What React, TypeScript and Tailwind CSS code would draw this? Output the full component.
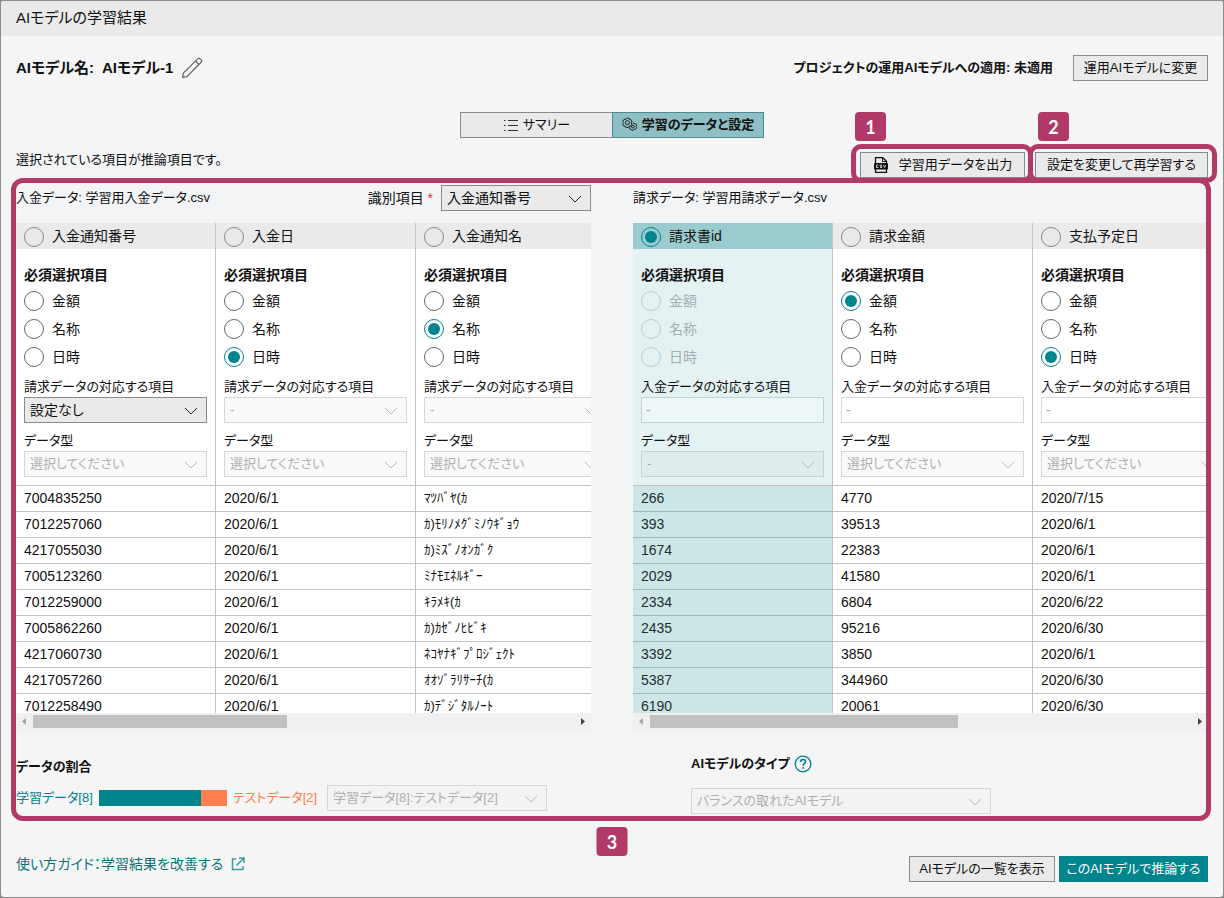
import type { ReactNode } from 'react';

const KINDS = ['金額', '名称', '日時'];

type Column = {
  name: string;
  kind?: string;
  target: string;
  dataType: string;
  targetEnabled?: boolean;
  kana?: boolean;
  rows: string[];
};

const paymentColumns: Column[] = [
  {
    name: '入金通知番号',
    target: '設定なし',
    targetEnabled: true,
    dataType: '選択してください',
    rows: ['7004835250', '7012257060', '4217055030', '7005123260', '7012259000', '7005862260', '4217060730', '4217057260', '7012258490'],
  },
  {
    name: '入金日',
    kind: '日時',
    target: '-',
    dataType: '選択してください',
    rows: ['2020/6/1', '2020/6/1', '2020/6/1', '2020/6/1', '2020/6/1', '2020/6/1', '2020/6/1', '2020/6/1', '2020/6/1'],
  },
  {
    name: '入金通知名',
    kind: '名称',
    target: '-',
    dataType: '選択してください',
    kana: true,
    rows: ['ﾏﾂﾊﾞﾔ(ｶ', 'ｶ)ﾓﾘﾉﾒｸﾞﾐﾉｳｷﾞｮｳ', 'ｶ)ﾐｽﾞﾉｵﾝｶﾞｸ', 'ﾐﾅﾓｴﾈﾙｷﾞｰ', 'ｷﾗﾒｷ(ｶ', 'ｶ)ｶｾﾞﾉﾋﾋﾞｷ', 'ﾈｺﾔﾅｷﾞﾌﾟﾛｼﾞｪｸﾄ', 'ｵｵｿﾞﾗﾘｻｰﾁ(ｶ', 'ｶ)ﾃﾞｼﾞﾀﾙﾉｰﾄ'],
  },
];

const invoiceColumns: Column[] = [
  {
    name: '請求書id',
    target: '-',
    dataType: '-',
    rows: ['266', '393', '1674', '2029', '2334', '2435', '3392', '5387', '6190'],
  },
  {
    name: '請求金額',
    kind: '金額',
    target: '-',
    dataType: '選択してください',
    rows: ['4770', '39513', '22383', '41580', '6804', '95216', '3850', '344960', '20061'],
  },
  {
    name: '支払予定日',
    kind: '日時',
    target: '-',
    dataType: '選択してください',
    rows: ['2020/7/15', '2020/6/1', '2020/6/1', '2020/6/1', '2020/6/22', '2020/6/30', '2020/6/1', '2020/6/30', '2020/6/30'],
  },
];

const Button = ({ className, children }: { className: string; children: ReactNode }) => (
  <button
    className={`flex h-[26px] items-center justify-center whitespace-nowrap border border-[#8a8a8a] bg-[#eaeaea] text-[13px] hover:bg-[#dedede] ${className}`}
  >
    {children}
  </button>
);

const Badge = ({ children }: { children: ReactNode }) => (
  <span className="flex h-[29px] w-[31px] items-center justify-center rounded bg-[#b23a68] font-[Lato,sans-serif] text-lg font-bold text-white">
    {children}
  </span>
);

type SelectProps = { id?: string; label?: string; value: string; disabled?: boolean; tinted?: boolean };

const Select = ({ id, label, value, disabled, tinted }: SelectProps) => (
  <div className="relative">
    <select
      id={id}
      aria-label={label}
      disabled={disabled}
      className={`block h-[26px] w-full appearance-none border pl-[5px] pr-8 disabled:text-[13px] disabled:opacity-100 ${
        tinted
          ? 'border-[#c3d3d4] bg-[#dfebec] text-[#9fabac]'
          : disabled
            ? 'border-[#d6d6d6] bg-[#efefef]/40 text-[#b0b0b0]'
            : 'border-[#8a8a8a] bg-[#eaeaea]'
      }`}
    >
      <option>{value}</option>
    </select>
    <svg
      className={`pointer-events-none absolute right-[9px] top-[10px] h-2 w-[14px] ${disabled ? 'text-[#b8b8b8]' : 'text-[#222]'}`}
      viewBox="0 0 14 8"
      fill="none"
      stroke="currentColor"
    >
      <path d="M1 1l6 6 6-6" />
    </svg>
  </div>
);

const radioClass =
  'm-0 size-5 shrink-0 appearance-none rounded-full border p-[3px] checked:border-[#00848e] checked:bg-[#00848e] bg-clip-content';

type DataTableProps = { id: string; columns: Column[]; selected?: number; targetLabel: string; targetAsText?: boolean };

const DataTable = ({ id, columns, selected, targetLabel, targetAsText }: DataTableProps) => (
  <div className="h-[490px] overflow-hidden">
    <table className="w-[600px] table-fixed border-separate border-spacing-0 bg-white text-left">
      <thead>
        <tr>
          {columns.map((col, i) => (
            <th
              key={col.name}
              className={`h-[26px] border-r border-[#c5c5c5] p-0 font-normal ${i === selected ? 'bg-[#9acccf]' : 'bg-[#eaeaea]'}`}
            >
              <label className="flex items-center gap-2 pl-2 pt-[2px]">
                <input type="radio" name={`${id}-column`} defaultChecked={i === selected} className={`${radioClass} border-[#8a8a8a]`} />
                <span className="pb-[2px]">{col.name}</span>
              </label>
            </th>
          ))}
        </tr>
        <tr>
          {columns.map((col, i) => {
            const tinted = i === selected;
            const key = `${id}-${i}`;
            return (
              <td
                key={col.name}
                className={`border-b border-r border-[#c5c5c5] px-2 pb-2 pt-4 align-top ${tinted ? 'bg-[#e4f2f3]' : 'bg-white'}`}
              >
                <fieldset disabled={tinted} className="mb-[10px]">
                  <legend className="mb-[6px] font-bold">必須選択項目</legend>
                  <div className="flex flex-col gap-2">
                    {KINDS.map((kind) => (
                      <label key={kind} className={`flex items-center gap-2 ${tinted ? 'text-[#a3b0b1]' : ''}`}>
                        <input
                          type="radio"
                          name={`${key}-kind`}
                          defaultChecked={kind === col.kind}
                          className={`${radioClass} ${tinted ? 'border-[#bccccd]' : 'border-[#666]'}`}
                        />
                        {kind}
                      </label>
                    ))}
                  </div>
                </fieldset>
                <label htmlFor={`${key}-target`} className="block whitespace-nowrap text-[13px]">{targetLabel}</label>
                {targetAsText ? (
                  <input
                    id={`${key}-target`}
                    type="text"
                    disabled
                    defaultValue={col.target}
                    className={`block h-[26px] w-full border px-1 ${
                      tinted ? 'border-[#c3d3d4] bg-[#edf6f8] text-[#9fabac]' : 'border-[#d6d6d6] bg-white text-[#a8a8a8]'
                    }`}
                  />
                ) : (
                  <Select id={`${key}-target`} value={col.target} disabled={!col.targetEnabled} />
                )}
                <label htmlFor={`${key}-type`} className="mt-2 block text-[13px]">データ型</label>
                <Select id={`${key}-type`} value={col.dataType} disabled tinted={tinted} />
              </td>
            );
          })}
        </tr>
      </thead>
      <tbody>
        {columns[0].rows.map((_, r) => (
          <tr key={r}>
            {columns.map((col, i) => (
              <td
                key={col.name}
                className={`h-[26px] border-b border-r px-2 pb-[2px] pt-0 ${
                  i === selected ? 'border-b-[#9bb8ba] border-r-[#c5c5c5] bg-[#cce6e7] text-[#1c2f30]' : 'border-[#c5c5c5]'
                } ${col.kana ? 'text-[13px] [font-feature-settings:normal]' : ''}`}
              >
                {col.rows[r]}
              </td>
            ))}
          </tr>
        ))}
      </tbody>
    </table>
  </div>
);

const ScrollBar = ({ size }: { size: number }) => (
  <div className="flex h-[17px] items-center bg-[#f0f0f0]">
    <svg className="h-[17px] w-[17px] shrink-0" viewBox="0 0 17 17" fill="#a3a3a3">
      <path d="M10 5v7L6 8.500z" />
    </svg>
    <div className="h-[13px] flex-1">
      <div className="h-full bg-[#c1c1c1]" style={{ width: `${size}%` }} />
    </div>
    <svg className="h-[17px] w-[17px] shrink-0" viewBox="0 0 17 17" fill="#404040">
      <path d="M7 5v7l4-3.500z" />
    </svg>
  </div>
);

const GearsIcon = () => (
  <svg className="size-4" viewBox="0 0 16 16" fill="none" stroke="#222" strokeWidth="1">
    <path d="M4.500 1.200h2.600l.5 1.300 1.400.2 1 2-.8 1.200.6 1.300-1.300 2.100-1.500-.1-.9 1.200H3.700l-.7-1.300-1.500-.2L.6 6.800l.8-1.200-.6-1.300 1.200-1.900 1.600.1z" />
    <circle cx="5.400" cy="5.600" r="2" />
    <path d="M10.600 6.200l1.300-.3.8 1 1.300.1.700 1.500-.6 1.100.5 1.200-1 1.400-1.200-.1-.8 1.100-1.700.1-.7-1-1.300-.1-.7-1.500.6-1.100" />
    <circle cx="10.900" cy="9.600" r="1.400" />
  </svg>
);

const CsvIcon = () => (
  <svg className="size-4" viewBox="0 0 16 16" fill="none">
    <path d="M2.500 6V.700h7.300l3.700 3.600V6M2.500 12v3.300h11V12" stroke="#111" strokeWidth="1.300" />
    <path d="M9.500 1v3.600h3.800" stroke="#111" />
    <rect x="1" y="6" width="14" height="6.500" rx="1" fill="#111" />
    <path d="M5.500 8H3.500v2.500h2M9 8H7.200v1.200h1.600v1.300H7M10.500 8l1.100 2.500L12.700 8" stroke="#eee" strokeWidth=".8" />
  </svg>
);

const App = () => {
  return (
    <div className="min-h-screen bg-[#8c8c8c] font-['Liberation_Sans','Noto_Sans_CJK_JP',sans-serif] text-sm leading-5 text-[#111] [font-feature-settings:'palt']">
      <div className="min-h-screen overflow-hidden rounded border border-[#8c8c8c] bg-[#f5f5f5]">
        <header className="flex h-[35px] items-center bg-[#eaeaea] px-[15px] pb-[2px]">
          <h1 className="text-[15px]">AIモデルの学習結果</h1>
        </header>

        <main className="px-[15px] pb-[15px] pt-[19px]">
          <div className="flex h-[26px] items-center justify-between">
            <div className="flex items-center gap-2 text-[15px] font-bold">
              <span>AIモデル名:</span>
              <span>AIモデル-1</span>
              <button aria-label="名前を編集">
                <svg className="size-[22px]" viewBox="0 0 24 24" fill="none" stroke="#6a6a6a" strokeWidth="1.400">
                  <path d="M1.800 22.200l.8-4.600L18.200 2c.8-.8 1.900-.8 2.700 0l1.100 1.100c.8.800.8 1.900 0 2.700L6.400 21.400z" />
                  <path d="M15.800 4.400l3.800 3.800" />
                </svg>
              </button>
            </div>
            <div className="flex items-center gap-5">
              <span className="text-[13px] font-bold">プロジェクトの運用AIモデルへの適用: 未適用</span>
              <Button className="w-[135px]">運用AIモデルに変更</Button>
            </div>
          </div>

          <nav className="mt-[31px] flex justify-center text-[13px]">
            <button className="flex h-[26px] w-[152px] items-center justify-center gap-1 border border-r-0 border-[#8a8a8a] bg-[#eaeaea]">
              <svg className="size-4" viewBox="0 0 16 16" stroke="#333">
                <path d="M1 3.500h1.500M1 8.500h1.500M1 13.500h1.500M5 3.500h10M5 8.500h10M5 13.500h10" />
              </svg>
              サマリー
            </button>
            <button className="flex h-[26px] w-[152px] items-center justify-center gap-1 border border-[#4d8a90] bg-[#8dbfc4] font-bold">
              <GearsIcon />
              学習のデータと設定
            </button>
          </nav>

          <div className="relative mt-[11px]">
            <section className="bg-[#f3f4f6] pb-[5px] pt-[3px]">
              <div className="flex items-start justify-between">
                <p className="text-[13px] leading-4">選択されている項目が推論項目です。</p>
                <div className="flex gap-[10px]">
                  <div className="relative">
                    <Button className="w-[165px] gap-[10px]">
                      <CsvIcon />
                      学習用データを出力
                    </Button>
                    <div className="pointer-events-none absolute -bottom-[5px] -left-[9px] -right-2 -top-2 rounded-[10px] border-[5px] border-[#b23a68]" />
                    <div className="absolute -left-[5px] -top-10"><Badge>1</Badge></div>
                  </div>
                  <div className="relative">
                    <Button className="w-[173px]">設定を変更して再学習する</Button>
                    <div className="pointer-events-none absolute -bottom-[5px] -left-[7px] -right-[9px] -top-2 rounded-[10px] border-[5px] border-[#b23a68]" />
                    <div className="absolute -top-10 left-[3px]"><Badge>2</Badge></div>
                  </div>
                </div>
              </div>

              <div className="mt-[7px] grid grid-cols-2 gap-[42px]">
                <div className="min-w-0">
                  <div className="mb-3 flex h-[26px] items-center justify-between">
                    <h2 className="text-[13px]">入金データ: 学習用入金データ.csv</h2>
                    <div className="flex items-center gap-2">
                      <label htmlFor="identifier">
                        識別項目 <span className="text-[#e53935]">*</span>
                      </label>
                      <div className="w-[150px]">
                        <Select id="identifier" value="入金通知番号" />
                      </div>
                    </div>
                  </div>
                  <DataTable id="payment" columns={paymentColumns} targetLabel="請求データの対応する項目" />
                  <ScrollBar size={47} />
                </div>
                <div className="min-w-0">
                  <div className="mb-3 flex h-[26px] items-center">
                    <h2 className="text-[13px]">請求データ: 学習用請求データ.csv</h2>
                  </div>
                  <DataTable id="invoice" columns={invoiceColumns} selected={0} targetLabel="入金データの対応する項目" targetAsText />
                  <ScrollBar size={57} />
                </div>
              </div>
            </section>

            <section className="grid grid-cols-2 gap-[42px] pt-[19px] text-[13px]">
              <div className="pt-[3px]">
                <h3 className="mb-2 font-bold">データの割合</h3>
                <div className="flex items-center gap-[6px] whitespace-nowrap">
                  <span className="text-[#00848e]">学習データ[8]</span>
                  <div className="flex h-4 w-32 bg-[#ff7f50]">
                    <div className="w-4/5 bg-[#00848e]" />
                  </div>
                  <span className="text-[#ff7f50]">テストデータ[2]</span>
                  <div className="ml-1 w-[220px]">
                    <Select label="データの割合" value="学習データ[8]:テストデータ[2]" disabled />
                  </div>
                </div>
              </div>
              <div className="pl-[58px]">
                <div className="mb-[14px] flex items-center gap-1">
                  <h3 className="font-bold">AIモデルのタイプ</h3>
                  <button aria-label="ヘルプ">
                    <svg className="size-[18px]" viewBox="0 0 18 18" fill="none" stroke="#00848e" strokeWidth="1.300">
                      <circle cx="9" cy="9" r="7.800" />
                      <path d="M6.500 7c0-1.500 1.100-2.500 2.500-2.500s2.500.9 2.500 2.200c0 1.800-2.400 1.900-2.400 4M9.100 12.200v1.500" strokeWidth="1.600" />
                    </svg>
                  </button>
                </div>
                <div className="w-[300px]">
                  <Select label="AIモデルのタイプ" value="バランスの取れたAIモデル" disabled />
                </div>
              </div>
            </section>

            <div className="pointer-events-none absolute -bottom-[7px] -left-[5px] -right-[3px] top-[29px] rounded-[12px] border-[5px] border-[#b23a68]" />
            <div className="absolute -bottom-[42px] left-1/2 -translate-x-1/2"><Badge>3</Badge></div>
          </div>

          <footer className="mt-[42px] flex items-start justify-between">
            <a href="#guide" className="flex items-center gap-2 leading-4 text-[#0b7479]">
              使い方ガイド：学習結果を改善する
              <svg className="size-[14px]" viewBox="0 0 14 14" fill="none" stroke="#3f9ba1" strokeWidth="1.500">
                <path d="M5 2H1.500v10.500H12V9M8 1h5v5M13 1L5.500 8.500" />
              </svg>
            </a>
            <div className="flex gap-1">
              <Button className="w-[146px]">AIモデルの一覧を表示</Button>
              <button className="h-[26px] w-[149px] whitespace-nowrap bg-[#00848e] text-[13px] text-white hover:bg-[#00727a]">
                このAIモデルで推論する
              </button>
            </div>
          </footer>
        </main>
      </div>
    </div>
  );
};

export default App;
